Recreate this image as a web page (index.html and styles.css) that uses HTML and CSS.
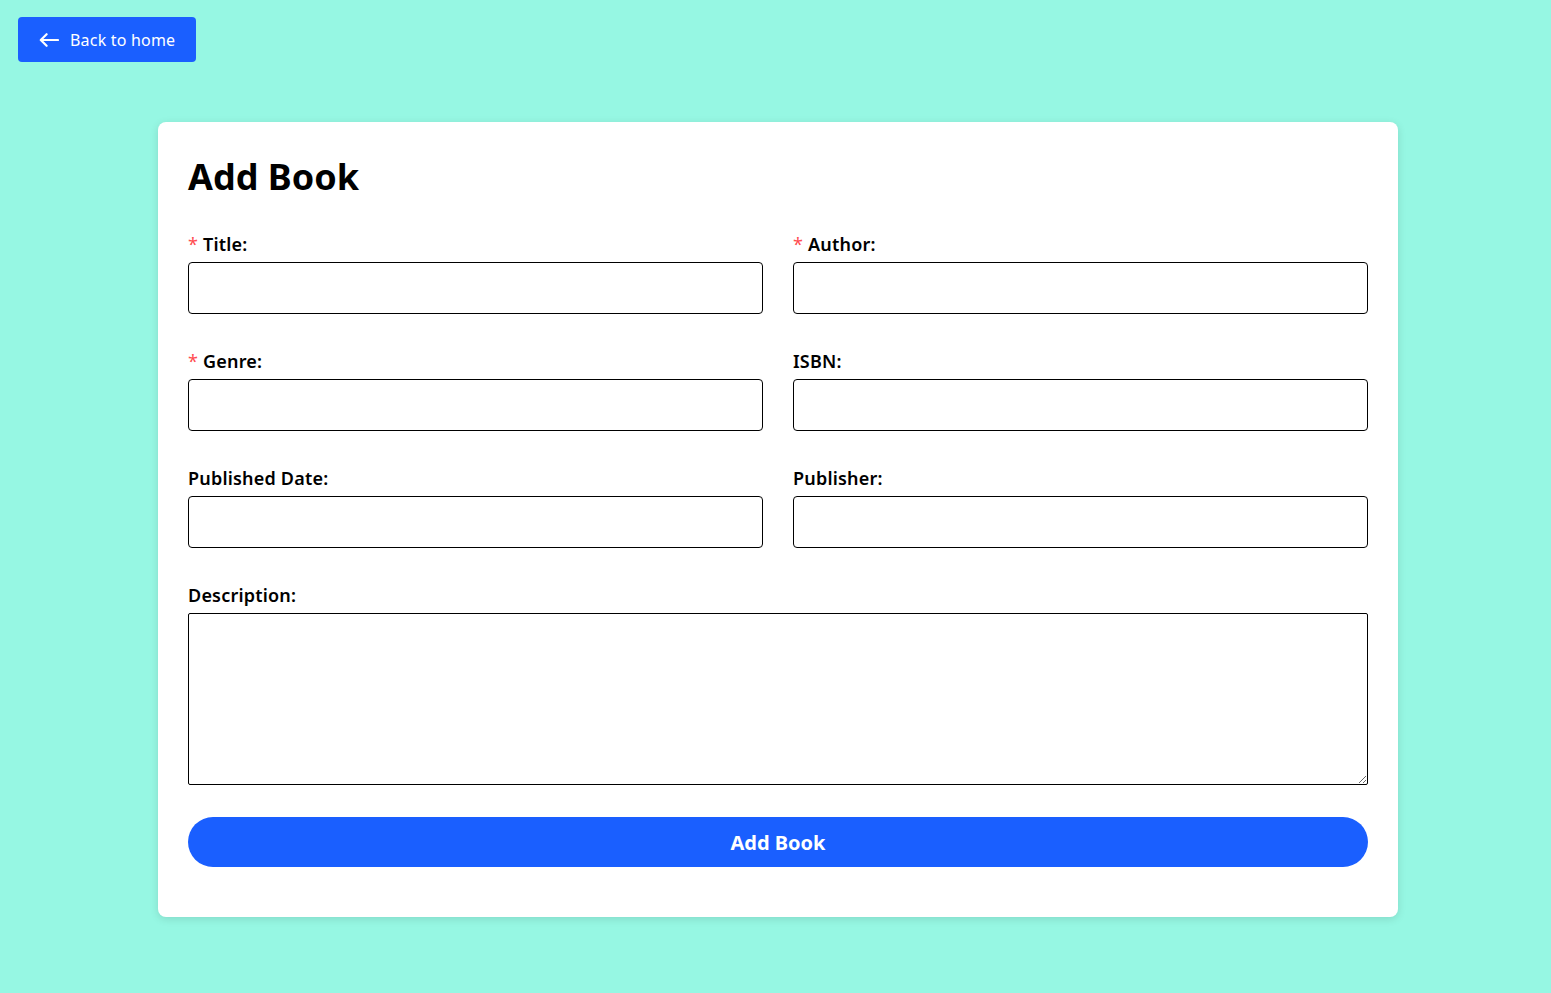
FILE: index.html
```html
<!DOCTYPE html>
<html lang="en">
<head>
<meta charset="utf-8">
<title>Add Book</title>
<link rel="stylesheet" href="styles.css">
</head>
<body>
<div class="topbar">
  <button class="back-btn" type="button">
    <svg class="back-icon" viewBox="0 0 20 14" width="20" height="14" aria-hidden="true">
      <path d="M19 7H2.2M7.6 1.2L1.8 7l5.8 5.8" fill="none" stroke="#fff" stroke-width="2.2" stroke-linecap="round" stroke-linejoin="round"/>
    </svg>
    <span>Back to home</span>
  </button>
</div>
<main class="card">
  <h1 class="title">Add Book</h1>
  <form class="form">
    <div class="grid">
      <div class="field">
        <label class="label"><span class="req">*</span> Title:</label>
        <input class="input" type="text">
      </div>
      <div class="field">
        <label class="label"><span class="req">*</span> Author:</label>
        <input class="input" type="text">
      </div>
      <div class="field">
        <label class="label"><span class="req">*</span> Genre:</label>
        <input class="input" type="text">
      </div>
      <div class="field">
        <label class="label">ISBN:</label>
        <input class="input" type="text">
      </div>
      <div class="field">
        <label class="label">Published Date:</label>
        <input class="input" type="text">
      </div>
      <div class="field">
        <label class="label">Publisher:</label>
        <input class="input" type="text">
      </div>
      <div class="field wide">
        <label class="label">Description:</label>
        <textarea class="textarea"></textarea>
      </div>
    </div>
    <button class="submit" type="button">Add Book</button>
  </form>
</main>
</body>
</html>
```
FILE: styles.css
```css
* { box-sizing: border-box; }
html, body {
  margin: 0;
  padding: 0;
}
body {
  background: #96f7e3;
  font-family: "Noto Sans", "Open Sans", sans-serif;
  color: #000;
  min-height: 993px;
}
.topbar {
  padding: 17px 18px 0;
}
.back-btn {
  display: flex;
  align-items: center;
  gap: 11px;
  width: 178px;
  height: 45px;
  padding: 0 0 0 21px;
  border: none;
  border-radius: 4px;
  background: #1a5fff;
  color: #fff;
  font-family: inherit;
  font-size: 16px;
  letter-spacing: 0.2px;
  cursor: pointer;
}
.back-icon { display: block; }
.card {
  width: 1240px;
  margin: 60px 0 0 158px;
  background: #fff;
  border-radius: 8px;
  box-shadow: 0 2px 8px rgba(0, 0, 0, 0.12);
  padding: 30px 30px 50px;
}
.title {
  margin: 0 0 30px;
  font-size: 36px;
  font-weight: 700;
  line-height: 50px;
}
.grid {
  display: grid;
  grid-template-columns: 1fr 1fr;
  column-gap: 30px;
  row-gap: 35px;
}
.field {
  display: flex;
  flex-direction: column;
}
.field.wide { grid-column: 1 / 3; }
.label {
  font-size: 18px;
  font-weight: 600;
  line-height: 24px;
  height: 30px;
  letter-spacing: 0.2px;
}
.req {
  color: #ff4d4f;
  font-weight: 400;
}
.input {
  display: block;
  width: 100%;
  height: 52px;
  border: 1px solid #000;
  border-radius: 4px;
  background: #fff;
  font-family: inherit;
  font-size: 16px;
  padding: 0 12px;
}
.textarea {
  display: block;
  width: 100%;
  height: 172px;
  border: 1px solid #000;
  border-radius: 2px;
  font-family: inherit;
  font-size: 16px;
  padding: 8px 12px;
  resize: vertical;
}
.submit {
  display: block;
  width: 100%;
  height: 50px;
  margin-top: 32px;
  border: none;
  border-radius: 25px;
  background: #1a5fff;
  color: #fff;
  font-family: inherit;
  font-size: 20px;
  font-weight: 700;
  cursor: pointer;
}
```
